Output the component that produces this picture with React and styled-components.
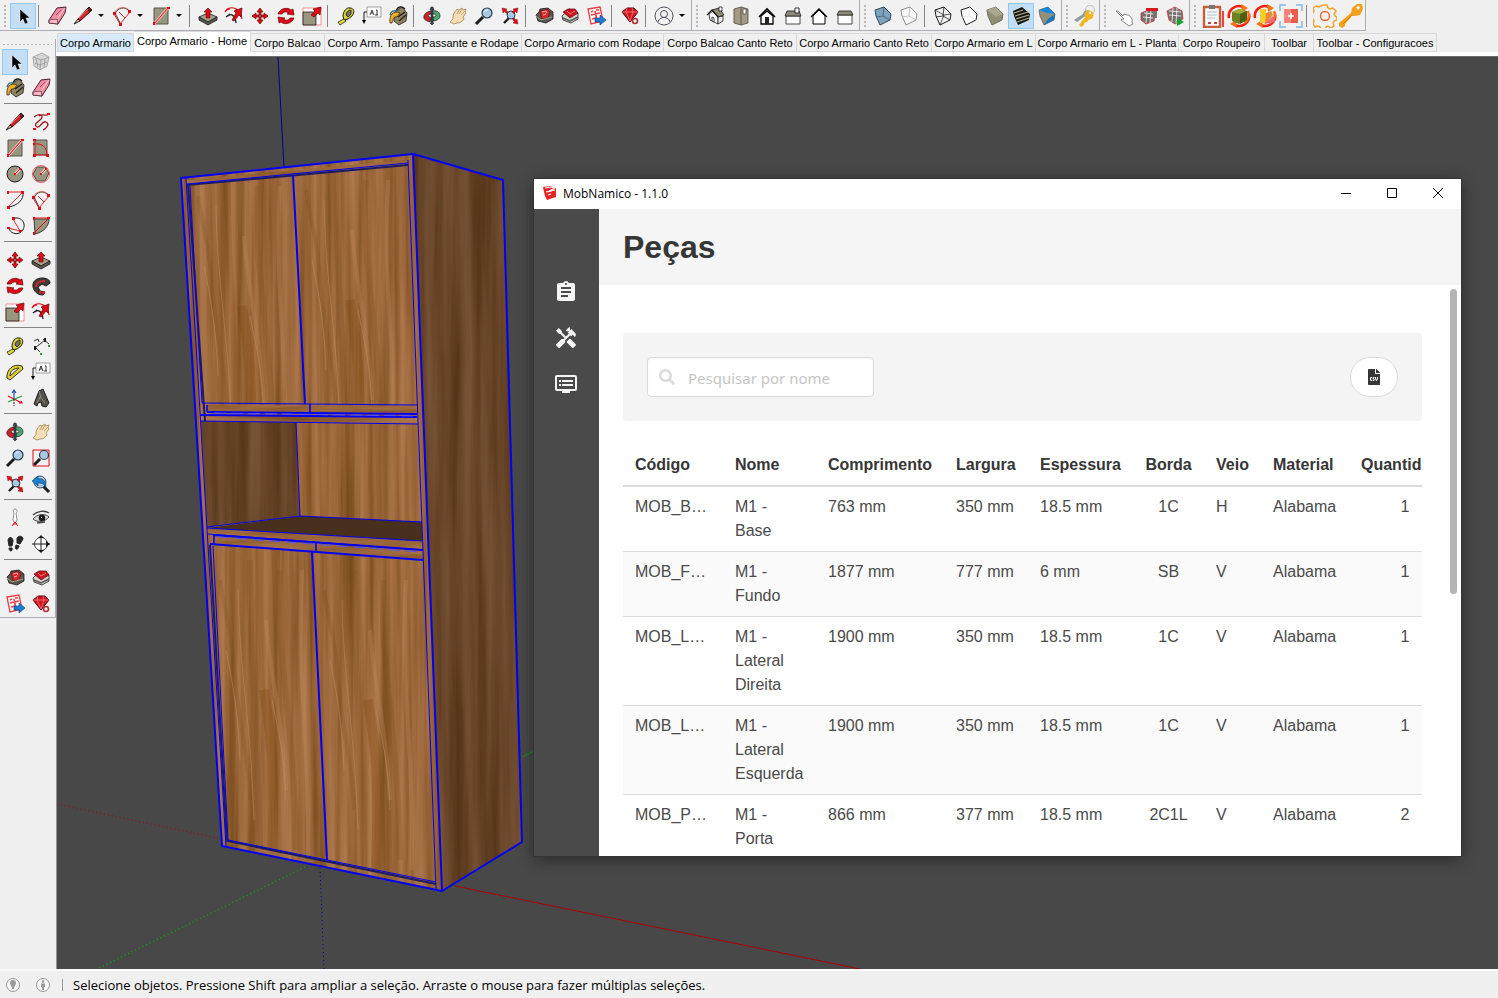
import React from 'react';
import styled, { createGlobalStyle, css } from 'styled-components';
import { MdAssignment, MdHandyman, MdDvr } from 'react-icons/md';
import { FaSearch, FaFileCsv } from 'react-icons/fa';

const GlobalStyle = createGlobalStyle`
  * { box-sizing: border-box; }
  html, body { margin: 0; height: 100%; }
  #root { height: 100%; }
  body {
    background: #f0f0f0;
    color: #000;
    font-family: "Liberation Sans", Arial, sans-serif;
    overflow: hidden;
  }
  button, input { font: inherit; }
`;

const uiFont = '"Open Sans", "Noto Sans", sans-serif';

/* ---------- shell ---------- */

const Shell = styled.div`
  display: flex;
  flex-direction: column;
  height: 100vh;
`;

const TopBar = styled.header`
  display: flex;
  flex: none;
  height: 31px;
`;

const ToolGroup = styled.div`
  display: flex;
  align-items: center;
  flex: none;
  padding: 2px 1px 1px 0;
  background: #f1f1f1;
  border-right: 1px solid #a9adb1;
  border-bottom: 1px solid #a9adb1;
`;

const Grip = styled.span`
  flex: none;
  width: 10px;
  height: 24px;
  background: radial-gradient(circle, #b8b8b8 1px, transparent 1px) 0 0 / 10px 4px;
`;

const Tool = styled.button`
  display: block;
  flex: none;
  width: 26px;
  height: 26px;
  padding: 0;
  border: 1px solid ${(p) => (p.$active ? '#90c8f6' : 'transparent')};
  background: ${(p) => (p.$active ? '#c4dff5' : 'transparent')};
  svg { display: block; width: 24px; height: 24px; }
`;

const Caret = styled.button`
  flex: none;
  width: 13px;
  height: 26px;
  padding: 0 0 0 2px;
  border: 0;
  background: transparent;
  &::before {
    content: '';
    display: block;
    width: 0;
    border: 3px solid transparent;
    border-top-color: #000;
    border-bottom: 0;
  }
`;

const Rule = styled.span`
  flex: none;
  background: #858585;
  ${(p) =>
    p.$across
      ? css`width: 48px; height: 1px; margin: 2px 0 5px 2px;`
      : css`width: 1px; height: 22px; margin: 0 5px 0 2px;`}
`;

const Body = styled.div`
  display: flex;
  flex: 1;
  min-height: 0;
`;

const SideDock = styled.aside`
  flex: none;
  width: 56px;
  padding-top: 8px;
`;

const SideTools = styled.div`
  display: flex;
  flex-wrap: wrap;
  padding: 1px 0 0 2px;
  background: #f1f1f1;
  border-right: 1px solid #a9adb1;
  border-bottom: 1px solid #a9adb1;
`;

const SideGrip = styled.span`
  width: 50px;
  height: 9px;
  background: radial-gradient(circle, #b8b8b8 1px, transparent 1px) 0 0 / 4px 9px;
`;

const Workspace = styled.div`
  display: flex;
  flex-direction: column;
  flex: 1;
  min-width: 0;
`;

const Tabs = styled.nav`
  display: flex;
  align-items: flex-end;
  flex: none;
  height: 25px;
  padding-left: 1px;
  border-bottom: 4px solid #fff;
  background: #f0f0f0;
`;

const Tab = styled.button`
  flex: 0 0 ${(p) => p.$width}px;
  height: ${(p) => (p.$selected ? '21px' : '19px')};
  padding: ${(p) => (p.$selected ? '0 0 2px' : '0')};
  border: 1px solid #d9d9d9;
  border-left-width: ${(p) => (p.$first ? '1px' : '0')};
  border-bottom-color: ${(p) => (p.$selected ? '#fff' : '#d9d9d9')};
  background: ${(p) => (p.$selected ? '#fff' : p.$first ? '#d8eaf9' : '#f0f0f0')};
  font-size: 11px;
  line-height: 16px;
  text-align: center;
  white-space: nowrap;
`;

const Viewport = styled.main`
  position: relative;
  flex: 1;
  min-height: 0;
  overflow: hidden;
  background: #484848;
  border-top: 1px solid #6b6b6b;
  border-left: 1px solid #8f8f8f;
`;

const Scene = styled.svg`
  display: block;
  width: 1441px;
  height: 912px;
`;

const StatusBar = styled.footer`
  display: flex;
  align-items: center;
  flex: none;
  height: 29px;
  padding: 0 0 0 5px;
  border-top: 2px solid #fafafa;
  font-family: ${uiFont};
  font-size: 13px;
`;

const StatusIcon = styled.svg`
  width: 16px;
  height: 16px;
  margin-right: 14px;
`;

const StatusText = styled.p`
  margin: 0 0 0 -3px;
  padding-left: 10px;
  border-left: 1px solid #999;
  line-height: 12px;
`;

/* ---------- plugin window ---------- */

const Dialog = styled.section`
  position: absolute;
  top: 122px;
  right: 37px;
  bottom: 113px;
  left: 477px;
  display: flex;
  flex-direction: column;
  background: #fff;
  box-shadow: 0 0 0 1px #353535, 0 3px 16px rgba(0, 0, 0, 0.45);
`;

const TitleBar = styled.div`
  display: flex;
  align-items: center;
  flex: none;
  height: 30px;
  padding: 0 0 2px 8px;
  font-family: ${uiFont};
  font-size: 12px;
`;

const Logo = styled.svg`
  width: 16px;
  height: 16px;
  margin-right: 5px;
`;

const TitleText = styled.span`
  flex: 1;
`;

const WinButton = styled.button`
  width: 46px;
  height: 28px;
  padding: 0;
  border: 0;
  background: transparent;
  svg { display: block; margin: 0 auto; }
`;

const DialogBody = styled.div`
  display: flex;
  flex: 1;
  min-height: 0;
`;

const DialogNav = styled.nav`
  display: flex;
  flex-direction: column;
  align-items: center;
  flex: none;
  gap: 22px;
  width: 65px;
  padding: 71px 1px 0 0;
  background: #4a4a4a;
`;

const NavLink = styled.a`
  display: block;
  height: 24px;
  color: #f5f5f5;
  svg { display: block; width: 24px; height: 24px; }
`;

const Page = styled.div`
  position: relative;
  display: flex;
  flex-direction: column;
  flex: 1;
  min-width: 0;
`;

const PageHeader = styled.header`
  flex: none;
  padding: 20px 24px;
  background: #f5f5f5;
`;

const Heading = styled.h1`
  margin: 0;
  color: #363636;
  font-size: 32px;
  font-weight: 700;
  line-height: 36px;
`;

const PageContent = styled.div`
  flex: 1;
  min-height: 0;
  overflow: hidden;
  padding: 48px 39px 0 24px;
`;

const ScrollThumb = styled.span`
  position: absolute;
  top: 80px;
  right: 4px;
  width: 7px;
  height: 305px;
  border-radius: 4px;
  background: #b4b4b4;
`;

const FilterBox = styled.form`
  display: flex;
  justify-content: space-between;
  padding: 24px;
  border-radius: 4px;
  background: #f4f4f4;
`;

const SearchField = styled.label`
  display: flex;
  align-items: center;
  gap: 13px;
  width: 227px;
  height: 40px;
  padding-left: 11px;
  border: 1px solid #dbdbdb;
  border-radius: 4px;
  background: #fff;
  box-shadow: inset 0 1px 2px rgba(10, 10, 10, 0.05);
  color: #dbdbdb;
  svg { flex: none; width: 16px; height: 16px; }
`;

const SearchInput = styled.input`
  flex: 1;
  min-width: 0;
  height: 24px;
  padding: 2px 0 0;
  border: 0;
  outline: 0;
  background: transparent;
  color: #363636;
  font-family: "Noto Sans", sans-serif;
  font-size: 15px;
  &::placeholder { color: #c6c6c6; opacity: 1; }
`;

const RoundButton = styled.button`
  display: flex;
  align-items: center;
  justify-content: center;
  width: 48px;
  height: 40px;
  padding: 0;
  border: 1px solid #dbdbdb;
  border-radius: 20px;
  background: #fff;
  color: #363636;
  svg { width: 12px; height: 16px; }
`;

const TableClip = styled.div`
  margin-top: 24px;
  overflow: hidden;
`;

const PartsTable = styled.table`
  width: 838px;
  table-layout: fixed;
  border-collapse: separate;
  border-spacing: 0;
  color: #4a4a4a;
  font-size: 16px;
  line-height: 24px;
  tbody tr:nth-child(even) { background: #fafafa; }
`;

const Th = styled.th`
  padding: 8px 12px;
  border-bottom: 2px solid #dbdbdb;
  color: #363636;
  text-align: ${(p) => (p.$center ? 'center' : 'left')};
`;

const Td = styled.td`
  padding: 8px 12px;
  border-bottom: 1px solid #dbdbdb;
  vertical-align: top;
  text-align: ${(p) => (p.$center ? 'center' : 'left')};
  white-space: ${(p) => (p.$nowrap ? 'nowrap' : 'normal')};
`;

/* ---------- toolbar icons ---------- */

const RED = '#e00b14';
const STONE = '#98967f';
const INK = '#1c1c1c';

const box = (face, side, line = INK) => (
  <>
    <path d="M5 7l9-3 7 7-1 6-10 5-4-9z" fill={face} stroke={line} />
    <path d="M14 4l-1 9 7 4M13 13l-7 1" fill="none" stroke={side} strokeWidth=".8" />
  </>
);

const cycle = (
  <>
    <path d="M3 15A10 10 0 0 1 17 4" fill="none" stroke="#f3200f" strokeWidth="2.600" />
    <path d="M23 11A10 10 0 0 1 9 22" fill="none" stroke="#f3200f" strokeWidth="2.600" />
    <path d="M15 1l7 4-6 4z" fill="#f4731c" />
    <path d="M11 25l-7-4 6-4z" fill="#f4731c" />
    <path d="M22 8c2 5 0 10-4 12" fill="none" stroke="#f4731c" strokeWidth="2.400" />
  </>
);

const icons = {
  cursor: <path d="M10 6v13l3-3 2 5 3-1-2-5h4z" fill="#000" stroke="#fff" strokeWidth=".5" />,
  eraser: (
    <>
      <path d="M5 17L13 5l9-1-1 6-7 11-9-1z" fill="#f08ba0" stroke="#45222a" />
      <path d="M5 17l8-1 8-11" fill="none" stroke="#ffd0da" />
      <path d="M5 17l8-1 1 5-9-1z" fill="#ffb9c7" stroke="#45222a" strokeWidth=".7" />
      <path d="M12 12l5-5" stroke="#b04a60" />
    </>
  ),
  pencil: (
    <>
      <path d="M8 16L18 5l3 3-11 10z" fill="#d8232b" stroke="#3d0d0d" />
      <path d="M17 6l2-2 3 3-2 2z" fill="#7a1b1b" stroke={INK} />
      <path d="M4 21l4-5 2 2z" fill="#efcf9d" stroke={INK} />
      <path d="M9 15L18 6" stroke="#ff7d7d" strokeWidth=".8" />
    </>
  ),
  arc: (
    <>
      <path d="M6 11C8 5 16 2 21 9M11 20L6 10" fill="none" stroke={INK} strokeWidth=".9" />
      <path d="M21 9L11 21L5 11M10 9l6 6" fill="none" stroke={RED} strokeWidth=".9" />
      <path d="M5 10C8 4 16 3 20 7" fill="none" stroke="#f25c5c" strokeWidth=".8" />
      <path d="M4 9h3v3H4zM19 7h3v3h-3zM10 20h3v3h-3z" fill={RED} />
    </>
  ),
  rect: (
    <>
      <path d="M6 5h14v16H6z" fill={STONE} stroke="#55564a" />
      <path d="M6 21L20 5" stroke="#ffd9d9" strokeWidth="2.600" />
      <path d="M6 21L20 5" stroke={RED} strokeWidth="1.100" />
      <path d="M5 19h2v3H5zM19 4h3v2h-3z" fill={RED} />
    </>
  ),
  rotRect: (
    <>
      <path d="M7 5h12v15H7z" fill={STONE} stroke="#55564a" />
      <path d="M6 20V5M6 9c8-1 13 3 13 11H6" fill="none" stroke={RED} />
      <path d="M5 4h3v2H5zM5 19h3v3H5zM18 19h3v3h-3zM5 8h2v2H5z" fill={RED} />
    </>
  ),
  circle: (
    <>
      <circle cx="13" cy="13" r="8" fill={STONE} stroke={INK} />
      <path d="M13 13l5-5" stroke="#ffd9d9" strokeWidth="2.600" />
      <path d="M13 13l5-5" stroke={RED} />
      <path d="M12 12h2v2h-2zM17 7h2v2h-2z" fill={RED} />
    </>
  ),
  polygon: (
    <>
      <path d="M9 6h8l4 6-4 8H9l-4-7z" fill={STONE} stroke="#444" />
      <circle cx="13" cy="13" r="8.500" fill="none" stroke="#f25c5c" />
      <path d="M13 13l5-5" stroke="#ffd9d9" strokeWidth="2.600" />
      <path d="M13 13l5-5" stroke={RED} />
      <path d="M12 12h2v2h-2zM17 7h2v2h-2z" fill={RED} />
    </>
  ),
  arcCenter: (
    <>
      <path d="M21 5c1 8-5 13-14 15" fill="none" stroke={INK} />
      <path d="M5 5h16L6 20" fill="none" stroke={RED} strokeWidth=".9" />
      <path d="M5 4h2v3H5zM19 4h3v3h-3zM5 19h3v3H5z" fill={RED} />
    </>
  ),
  arc3: (
    <>
      <path d="M13 5c9-1 12 9 6 14-5 4-12 0-12-4" fill="none" stroke={INK} />
      <path d="M11 6l7 12-12-3" fill="none" stroke={RED} strokeWidth=".9" />
      <path d="M10 4h3v3h-3zM17 17h3v2h-3zM5 14h3v2H5z" fill={RED} />
    </>
  ),
  pie: (
    <>
      <path d="M6 6h15c0 7-5 13-14 15z" fill={STONE} stroke={INK} strokeWidth=".8" />
      <path d="M6 5h15L6 20" fill="none" stroke={RED} />
      <path d="M5 4h2v3H5zM19 4h3v2h-3zM5 19h2v3H5z" fill={RED} />
    </>
  ),
  push: (
    <>
      <path d="M4 14l9-4 9 4-9 5z" fill="#a5a38b" stroke={INK} strokeWidth=".8" />
      <path d="M4 14v3l9 5 9-5v-3l-9 5z" fill="#5c5b4b" stroke={INK} strokeWidth=".8" />
      <path d="M13 5l4 4h-2v6h-4V9H9z" fill={RED} stroke="#5c0509" strokeWidth=".6" />
    </>
  ),
  offset: (
    <>
      <path d="M5 7c6-5 15-1 16 9M4 9c1-2 3-3 5-3" fill="none" stroke={RED} strokeWidth="1.200" />
      <path d="M7 13c3-3 7-1 8 7M5 14l4-3" fill="none" stroke={INK} strokeWidth="1.300" />
      <path d="M11 17l4-7-2-2 8-3-1 9-2-2-5 6z" fill={RED} stroke="#5c0509" strokeWidth=".7" />
    </>
  ),
  move: (
    <>
      <path d="M13 5l3 4h-2v3h-2V9h-2zM13 21l-3-4h2v-3h2v3h2zM5 13l4-3v2h3v2H9v2zM21 13l-4 3v-2h-3v-2h3v-2z" fill={RED} stroke="#6b0509" strokeWidth=".7" />
    </>
  ),
  rotate: (
    <>
      <path d="M5 11C7 5 15 4 18 7l2-1 1 6-7-1 2-1c-3-2-6-1-7 1z" fill={RED} stroke="#6b0509" strokeWidth=".7" />
      <path d="M21 15c-2 6-10 7-13 4l-2 1-1-6 7 1-2 1c3 2 6 1 7-1z" fill={RED} stroke="#6b0509" strokeWidth=".7" />
    </>
  ),
  scale: (
    <>
      <path d="M4 5h18v17H4z" fill="#fff" stroke="#f2777b" strokeWidth=".8" />
      <path d="M4 9h13v13H4z" fill={STONE} stroke={INK} strokeWidth=".8" />
      <path d="M12 12l4-4-2-2 8-2-1 8-2-2-4 4z" fill={RED} stroke="#6b0509" strokeWidth=".7" />
    </>
  ),
  followMe: (
    <>
      <path d="M5 14c-1-6 4-9 9-9 5 0 8 2 8 5l-4 3-4-2-4 3 2 4 5 1-2 3c-6 0-9-4-10-8z" fill="#413b36" stroke={INK} />
      <path d="M8 14c0-5 4-6 9-6M11 19l6 1" fill="none" stroke="#c92a2f" strokeWidth="2" />
    </>
  ),
  tape: (
    <>
      <path d="M10 13c0-5 4-9 7-8 4 0 5 4 2 8l-4 3-4 1z" fill="#d8d034" stroke={INK} />
      <path d="M13 12c0-3 3-5 5-5v4l-3 3z" fill="#77755f" stroke={INK} strokeWidth=".8" />
      <path d="M5 19l6-3 2 2-6 4z" fill="#e8de3a" stroke={INK} strokeWidth=".8" />
    </>
  ),
  text: (
    <>
      <path d="M8 4h14v10H8z" fill="#fff" stroke="#888" strokeWidth=".8" />
      <path d="M8 9H5v10" fill="none" stroke={INK} />
      <path d="M3 17h4l-2 4z" fill="#000" />
      <path d="M11 12l2-5 2 5M12 10h2M17 7h1v5M16 12h3" fill="none" stroke="#222" strokeWidth=".9" />
    </>
  ),
  paint: (
    <>
      <path d="M10 9l7-5 5 6-1 8-7 4-5-4z" fill="#8f8360" stroke={INK} strokeWidth=".8" />
      <path d="M11 8c2-5 6-5 9-2M13 14l7-5M14 18l7-6" fill="none" stroke={INK} strokeWidth="1.300" />
      <path d="M5 20C4 12 8 7 15 10l-3 4c-3-1-4 2-5 6z" fill="#f0ae22" stroke={INK} strokeWidth=".7" />
      <path d="M5 12c1-4 4-5 7-4" fill="none" stroke="#3d6f86" strokeWidth="1.500" />
    </>
  ),
  orbit: (
    <>
      <path d="M5 13c1-4 6-5 8-5v3c-3 0-4 1-4 2l3 2-1 4c-4-1-7-3-6-6z" fill="#d0202a" stroke={INK} strokeWidth=".7" />
      <path d="M13 8c6-1 8 2 8 5s-4 5-7 5v-4c4 0 4-3 0-3z" fill="#4da673" stroke={INK} strokeWidth=".7" />
      <path d="M12 4h2l1 3h-1v13h1l-2 2-2-2h1V7h-1z" fill="#3c4552" stroke={INK} strokeWidth=".5" />
    </>
  ),
  hand: (
    <>
      <path d="M5 19l3-3v-3c1-4 3-5 4-7l2 1 3-2 1 2 3-1-1 3 1 1-3 4 1 2c-2 3-4 4-7 4l-3 1z" fill="#f5deb6" stroke="#a5854f" strokeWidth=".8" />
      <path d="M12 11l2-4M14 11l3-5M16 12l4-4" stroke="#b8955e" strokeWidth=".8" />
    </>
  ),
  zoom: (
    <>
      <path d="M5 21l7-7" stroke={INK} strokeWidth="3" />
      <circle cx="16" cy="10" r="5" fill="#a9c9e4" stroke="#2b3b4c" strokeWidth="1.200" />
      <path d="M13 9c1-2 3-2 4-2" fill="none" stroke="#e8f4ff" />
    </>
  ),
  zoomWindow: (
    <>
      <path d="M5 5h16v16H5z" fill="none" stroke={RED} />
      <path d="M6 20l6-6" stroke={INK} strokeWidth="3" />
      <circle cx="16" cy="10" r="4.500" fill="#a9c9e4" stroke="#2b3b4c" strokeWidth="1.200" />
    </>
  ),
  extents: (
    <>
      <path d="M7 20l5-5" stroke={INK} strokeWidth="2.400" />
      <circle cx="14" cy="12" r="4" fill="#a9c9e4" stroke="#2b3b4c" />
      <path
        d="M5 5l5 1-1 1 2 2-1.500 1.500-2-2L6 10zM21 5l-5 1 1 1-2 2 1.500 1.500 2-2L20 10zM21 21l-1-5-1 1-2-2-1.500 1.500 2 2L16 20z"
        fill={RED}
        stroke="#6b0509"
        strokeWidth=".4"
      />
    </>
  ),
  previous: (
    <>
      <path d="M14 14l7 7" stroke={INK} strokeWidth="3" />
      <circle cx="12" cy="11" r="6" fill="#a9c9e4" stroke="#33526b" />
      <path d="M4 10l6-5v3c6-1 8 3 8 8-3-4-5-4-8-4v3z" fill="#1e80d0" stroke="#0b3e6c" strokeWidth=".6" />
    </>
  ),
  warehouse: (
    <>
      <path d="M5 12l3-3 1-3 8-1 5 4v7l-7 4-8-2z" fill="#59564b" stroke={INK} strokeWidth=".8" />
      <path d="M9 8l7-2 3 3-2 6-6 1z" fill="#d9232b" stroke="#5c0509" strokeWidth=".6" />
      <path d="M11 9l4-1 1 2M12 12l3-1" fill="none" stroke="#ffb8b8" />
      <path d="M5 13l5 4 11-3" fill="none" stroke="#a8a695" />
    </>
  ),
  gem: (
    <>
      <path d="M5 13l7-7 9 4v6l-7 4-8-3z" fill="#d7d7d2" stroke={INK} strokeWidth=".8" />
      <path d="M6 9l5-3 7 0 3 4-8 5z" fill="#cf1620" stroke="#4a0508" strokeWidth=".7" />
      <path d="M10 8l3 3 5-3" fill="none" stroke="#ff9292" strokeWidth=".8" />
      <path d="M6 15l7 3 8-4" fill="none" stroke="#555" strokeWidth="1.500" />
    </>
  ),
  layout: (
    <>
      <path d="M5 6l12-2 3 14-12 3z" fill="#fff" stroke="#ee3a42" strokeWidth="1.300" />
      <path d="M8 9l2-1M13 7l3 0M8 12l9-2M9 16l4-1M12 8l2 9" stroke="#ee3a42" strokeWidth="1.600" />
      <path d="M12 15h5v-3l6 5-6 5v-3h-5z" fill="#1c7bd4" stroke="#0b3e6c" strokeWidth=".6" />
    </>
  ),
  extension: (
    <>
      <path d="M5 9l5-4h7l4 4-8 10z" fill="#cf1620" stroke="#4a0508" />
      <path d="M5 9h16M10 5l-1 4 4 9 3-9-1-4" fill="none" stroke="#ff8585" strokeWidth=".7" />
      <circle cx="18" cy="18" r="2.500" fill="#eee" stroke="#b02f36" strokeWidth="1.600" />
    </>
  ),
  user: (
    <>
      <circle cx="13" cy="13" r="9" fill="none" stroke="#52525c" />
      <circle cx="13" cy="11" r="3.500" fill="none" stroke="#52525c" />
      <path d="M7 19c1-6 11-6 12 0" fill="none" stroke="#52525c" />
    </>
  ),
  iso: (
    <>
      <path d="M7 11l4-3 5 6v7l-8-4z" fill="#fff" stroke={INK} strokeWidth=".8" />
      <path d="M16 14l5-1v5l-5 3z" fill="#e8e8e8" stroke={INK} strokeWidth=".8" />
      <path d="M10 7l7-2 5 7-6 2z" fill="#8d8b76" stroke={INK} strokeWidth=".8" />
      <path d="M5 12l5-5 6 7" fill="none" stroke={INK} strokeWidth="1.200" />
      <path d="M17 4h3v4h-3zM10 14l2 1v4l-2-1z" fill="#fff" stroke={INK} strokeWidth=".8" />
    </>
  ),
  topView: (
    <>
      <path d="M6 6l7-2 7 2v14l-7 2-7-2z" fill="#a09b82" stroke="#504d40" strokeWidth=".8" />
      <path d="M13 4v18M15 6h3v5h-3z" fill="#fff" stroke="#504d40" strokeWidth=".8" />
    </>
  ),
  front: (
    <>
      <path d="M7 13v8h12v-8l-6-5z" fill="#fff" stroke="#000" strokeWidth="1.300" />
      <path d="M5 14l8-8 8 8" fill="none" stroke="#000" strokeWidth="1.600" />
      <path d="M11 14h4v7h-4z" fill="#222" />
    </>
  ),
  right: (
    <>
      <path d="M6 13h14v8H6z" fill="#fff" stroke={INK} strokeWidth=".8" />
      <path d="M7 8h12l2 5H5z" fill="#8d8b76" stroke={INK} strokeWidth=".8" />
      <path d="M15 5h4v5h-4z" fill="#fff" stroke={INK} strokeWidth=".9" />
    </>
  ),
  back: (
    <>
      <path d="M7 13v8h12v-8l-6-6z" fill="#fff" stroke="#000" />
      <path d="M5 14l8-8 8 8" fill="none" stroke="#000" strokeWidth="1.300" />
    </>
  ),
  left: (
    <>
      <path d="M6 12h14v9H6z" fill="#fff" stroke={INK} strokeWidth=".8" />
      <path d="M7 8h12l2 4H5z" fill="#8d8b76" stroke={INK} strokeWidth=".8" />
    </>
  ),
  xray: box('#7fa3bd', '#3d5d73', '#2c4a60'),
  backEdges: box('#f8f8f8', '#b3b3b3', '#8d8d8d'),
  wire: (
    <>
      {box('none', INK)}
      <path d="M5 7l9 5 7-1M14 12l-4 10" fill="none" stroke={INK} strokeWidth=".7" />
    </>
  ),
  hidden: box('#fff', '#ddd'),
  shaded: (
    <>
      {box('#918e76', '#918e76', '#6d6a58')}
      <path d="M5 7l9-3 7 7-7 3z" fill="#aaa78e" />
    </>
  ),
  textured: (
    <>
      <path d="M5 8l9-4 8 7-1 6-11 5-4-9z" fill="#171510" />
      <path d="M6 10l9-3M7 13l13-4M8 16l13-4M9 19l12-4" stroke="#b0aa88" strokeWidth="1.300" />
    </>
  ),
  mono: (
    <>
      <path d="M5 7l9-3 7 7-1 6-10 5-4-9z" fill="#938f78" stroke="#555" strokeWidth=".7" />
      <path d="M5 7l9-3 7 7-8-1z" fill="#1688e0" />
      <path d="M21 11l-1 6-10 5 4-6z" fill="#1877c2" />
    </>
  ),
  keys: (
    <>
      <circle cx="18" cy="7" r="4.500" fill="none" stroke="#b9c3c6" strokeWidth="1.200" />
      <path d="M2 17l9-6c0-3 4-5 7-3l-1 5-5 1-7 5z" fill="#8e9da1" />
      <circle cx="17" cy="12" r="4.500" fill="#f3b51e" />
      <path d="M14 13l-7 9 2 2 3-2v-2l3-1 3-4z" fill="#f3b51e" />
      <circle cx="18" cy="10" r="1.200" fill="#f1f1f1" />
    </>
  ),
  pointer: (
    <path d="M6 8l2 0 5 5 1-2 3 1 2 0 3 4 0 3 1 2-4 2-8-6 1-1 2 0z" fill="#fff" stroke="#777" strokeWidth=".9" />
  ),
  component: (
    <>
      <path d="M5 10l10-4 5 3-2 9-8 3-5-4z" fill="#77706c" stroke="#d2343c" strokeWidth=".8" />
      <path d="M8 10l9 1M7 14l10 1M11 8l-1 12M15 7l-1 13" stroke="#eee" strokeWidth=".9" />
      <path d="M10 5h12v3H10z" fill="#d81820" />
      <path d="M19 8h2v7h-2z" fill="#777" />
    </>
  ),
  componentPlay: (
    <>
      <path d="M5 8l8-4 7 4 1 8-8 5-6-4z" fill="#77706c" stroke="#d2343c" strokeWidth=".8" />
      <path d="M7 8l12 1M7 12l12 1M11 5l-1 14M15 5l-1 15" stroke="#eee" strokeWidth=".9" />
      <path d="M15 15l7 4-7 4z" fill="#12a62b" />
    </>
  ),
  clipboard: (
    <>
      <path d="M4 4h16v20H4z" fill="#f7f9fa" stroke="#c3613c" strokeWidth="2.400" />
      <path d="M9 2h6v4H9z" fill="#777" />
      <path d="M7 9h10M7 12h10M7 15h8" stroke="#aac0cc" />
      <path d="M8 20h3M14 20h3" stroke="#b44" strokeWidth="2" />
      <path d="M23 8v16" stroke="#f00" strokeWidth="1.500" />
    </>
  ),
  cubeCycle: (
    <>
      {cycle}
      <path d="M6 9l7-3 8 2v9l-8 4-7-3z" fill="#6f8120" />
      <path d="M6 9l8 2 7-3-8-2z" fill="#9ead37" />
      <path d="M14 11v10l7-4V8z" fill="#4e6012" />
    </>
  ),
  colorCycle: (
    <>
      {cycle}
      <path d="M8 6h6v14H8z" fill="#f8cf2a" />
      <path d="M14 10l5-2 2 4-8 9z" fill="#f08b35" />
      <path d="M12 21l9-8 2 6z" fill="#ed6a76" />
    </>
  ),
  target: (
    <>
      <path d="M2 8V2h6M18 2h6v6M24 18v6h-6M8 24H2v-6" fill="none" stroke="#9fc6e6" strokeWidth="2" />
      <path d="M6 6h14v14H6z" fill="#ee5c50" />
      <path d="M6 6h7v14H6z" fill="#f5857a" />
      <path d="M13 10v6M10 13h6" stroke="#fff" strokeWidth="1.500" />
    </>
  ),
  gear: (
    <>
      <path
        d="M11 2h4l1 3 2 1 3-1 3 3-2 3 1 2 2 1v3l-3 1-1 2 1 3-3 2-3-2-2 1-1 3h-3l-2-3-2-1-3 1-2-3 1-3-1-2-3-1v-4l3-1 1-2-1-3 3-2 3 1 2-1z"
        fill="none"
        stroke="#f3a22e"
        strokeWidth="1.500"
        strokeLinejoin="round"
      />
      <circle cx="13" cy="13" r="4.500" fill="none" stroke="#ef6b2c" strokeWidth="1.500" />
    </>
  ),
  goldKey: (
    <>
      <path d="M14 5l5-4 5 0 1 5-3 6-5 1-3 0-7 8v2l-3 2-3-2v-3L13 10z" fill="#f2a11c" />
      <path d="M18 4l3-1 1 2-2 2z" fill="#f1f1f1" />
      <path d="M5 21l9-9" stroke="#d5810f" />
    </>
  ),
  ghostBox: (
    <>
      <path d="M5 8l9-4 7 4-2 9-7 4-6-4z" fill="#d5d5d5" stroke="#aaa" />
      <path d="M5 8l8 3 8-3M13 11l-1 10M8 10l2 8M17 10l-1 9M7 14l5 2 7-3" fill="none" stroke="#999" strokeWidth=".8" />
    </>
  ),
  freehand: (
    <>
      <path d="M6 8c6-5 11-1 6 3s-6 5-3 7 5-7 9-5 1 6-3 8M11 7c4-3 8 1 9-2" fill="none" stroke="#9d1820" strokeWidth="1.300" />
      <path d="M19 4h3v2h-3zM5 19h3v2H5z" fill={RED} />
    </>
  ),
  dimension: (
    <>
      <path d="M7 15l10-8M7 14l5 5M15 6l6 5M6 8l4-2 1 3" fill="none" stroke={INK} strokeWidth=".9" />
      <path d="M12 20h2v2h-2zM20 12h2v2h-2z" fill="#22a03a" />
      <path d="M6 13h2v4H6zM16 5h2v4h-2z" fill={INK} />
    </>
  ),
  protractor: (
    <>
      <path d="M5 19C4 11 11 4 20 7l1 3L8 21z" fill="#e0d32e" stroke={INK} strokeWidth=".9" />
      <path d="M8 17c0-5 4-8 9-8z" fill="#f1f1f1" stroke={INK} strokeWidth=".9" />
    </>
  ),
  axes: (
    <>
      <path d="M12 14V5M10 8l2-3 2 3" fill="none" stroke="#1d4fb8" strokeWidth="1.200" />
      <path d="M6 11l14 7M17 18l3 0-1-2" fill="none" stroke={RED} strokeWidth="1.200" />
      <path d="M6 17l14-6" stroke="#1f9c45" strokeWidth="1.200" />
      <path d="M12 14v7" stroke={INK} strokeDasharray="2 1" />
    </>
  ),
  text3d: (
    <>
      <path d="M6 19l5-13 4-2 6 14-3 4-4-1-1-4-3 1-1 3z" fill="#55524a" stroke={INK} />
      <path d="M11 6l2 7 4 5M12 12l-3 6" fill="none" stroke="#a09d8a" strokeWidth=".8" />
    </>
  ),
  camera: (
    <>
      <path d="M13 4c2 0 3 3 1 4l1 7-2 3-2-3 1-7c-1-1-1-4 1-4z" fill="#fff" stroke="#777" strokeWidth=".8" />
      <path d="M10 21l3-4 3 4M11 19h4" fill="none" stroke={RED} />
    </>
  ),
  eye: (
    <>
      <path d="M5 14c4-5 12-6 16-2-4 5-11 6-16 2z" fill="#ddd" stroke={INK} strokeWidth=".8" />
      <circle cx="14" cy="13" r="3.300" fill={INK} />
      <path d="M5 10c4-4 12-5 16-2M9 18l8-1" fill="none" stroke="#444" strokeWidth="1.300" />
      <path d="M13 12h1v1h-1z" fill="#fff" />
    </>
  ),
  feet: (
    <path d="M6 9c1-4 5-3 5 1l-1 5H7zM7 17h3c1 4-3 4-3 0zM15 7c2-3 6-2 6 1l-3 5-3-1zM14 14l3 1c-1 5-5 4-3-1z" fill="#252525" stroke="#252525" />
  ),
  section: (
    <>
      <circle cx="13" cy="13" r="6.500" fill="#fff" stroke={INK} strokeWidth=".8" />
      <path d="M4 13h18M13 5v16" stroke={INK} />
      <path d="M13 4l3 3h-6zM22 13l-4-3v6zM13 22l-3-3h6z" fill={INK} />
    </>
  ),
};

const ToolButton = ({ name, active }) => (
  <Tool type="button" aria-label={name} $active={active}>
    <svg viewBox="1 1 24 24" aria-hidden="true">{icons[name]}</svg>
  </Tool>
);

const topGroups = [
  ['*cursor', '|', 'eraser', 'pencil', 'v', 'arc', 'v', 'rect', 'v', '|', 'push', 'offset', 'move', 'rotate', 'scale', '|',
    'tape', 'text', 'paint', '|', 'orbit', 'hand', 'zoom', 'extents', '|', 'warehouse', 'gem', 'layout', '|', 'extension', '|', 'user', 'v'],
  ['iso', 'topView', 'front', 'right', 'back', 'left'],
  ['xray', 'backEdges', '|', 'wire', 'hidden', 'shaded', '*textured', 'mono'],
  ['keys'],
  ['pointer', 'component', 'componentPlay'],
  ['clipboard', 'cubeCycle', 'colorCycle', 'target', '|', 'gear', 'goldKey'],
];

const sideItems = [
  '*cursor', 'ghostBox', 'paint', 'eraser', '|',
  'pencil', 'freehand', 'rect', 'rotRect', 'circle', 'polygon', 'arcCenter', 'arc', 'arc3', 'pie', '|',
  'move', 'push', 'rotate', 'followMe', 'scale', 'offset', '|',
  'tape', 'dimension', 'protractor', 'text', 'axes', 'text3d', '|',
  'orbit', 'hand', 'zoom', 'zoomWindow', 'extents', 'previous', '|',
  'camera', 'eye', 'feet', 'section', '|',
  'warehouse', 'gem', 'layout', 'extension',
];

const renderItem = (across) => (item, i) => {
  if (item === '|') return <Rule key={i} $across={across} />;
  if (item === 'v') return <Caret key={i} type="button" aria-label="Mais opções" />;
  const active = item.startsWith('*');
  return <ToolButton key={i} name={active ? item.slice(1) : item} active={active} />;
};

const tabs = [
  { title: 'Corpo Armario', width: 77 },
  { title: 'Corpo Armario - Home', width: 117 },
  { title: 'Corpo Balcao', width: 74 },
  { title: 'Corpo Arm. Tampo Passante e Rodape', width: 197 },
  { title: 'Corpo Armario com Rodape', width: 142 },
  { title: 'Corpo Balcao Canto Reto', width: 133 },
  { title: 'Corpo Armario Canto Reto', width: 135 },
  { title: 'Corpo Armario em L', width: 104 },
  { title: 'Corpo Armario em L - Planta', width: 143 },
  { title: 'Corpo Roupeiro', width: 86 },
  { title: 'Toolbar', width: 49 },
  { title: 'Toolbar - Configuracoes', width: 123 },
];

/* ---------- 3D scene ---------- */

const WoodFilter = ({ id, seed, freq, r, g, b }) => (
  <filter id={id} x="0" y="0" width="100%" height="100%" colorInterpolationFilters="sRGB">
    <feTurbulence type="fractalNoise" baseFrequency={freq} numOctaves="4" seed={seed} />
    <feColorMatrix values="1 0 0 0 0  1 0 0 0 0  1 0 0 0 0  0 0 0 0 1" />
    <feComponentTransfer>
      <feFuncR type="table" tableValues={r} />
      <feFuncG type="table" tableValues={g} />
      <feFuncB type="table" tableValues={b} />
    </feComponentTransfer>
    <feComposite in2="SourceGraphic" operator="in" />
  </filter>
);

const light = { r: '.45 .52 .61 .68 .72', g: '.27 .33 .405 .47 .51', b: '.1 .15 .23 .3 .34' };
const dark = { r: '.31 .35 .41 .46 .49', g: '.19 .22 .275 .32 .34', b: '.08 .11 .16 .21 .24' };

const doors = [
  { id: 'd1', pts: '188,184 293,175 305,404 202,403', x: 190, y: 176 },
  { id: 'd2', pts: '293,175 408,164 417,405 305,404', x: 298, y: 170 },
  { id: 'd3', pts: '211,544 312,552 327,860 227,840', x: 212, y: 560 },
  { id: 'd4', pts: '312,552 423,559 436,882 327,860', x: 316, y: 570 },
];

const Grain = ({ x, y }) => (
  <g transform={`translate(${x} ${y})`} fill="none">
    <path d="M8 20C14 60 20 70 22 110C26 160 36 190 38 240" stroke="#7d4b20" strokeWidth="4" opacity=".25" />
    <path d="M38 0C36 80 46 140 48 300M68 10C62 90 82 150 84 290" stroke="#7a4a18" strokeWidth="6" opacity=".22" />
    <path d="M52 130C58 170 64 200 60 300" stroke="#7a4206" strokeWidth="10" opacity=".28" />
    <path d="M54 60C58 120 70 150 74 230M90 10C84 120 98 170 96 300" stroke="#c08a58" strokeWidth="4" opacity=".3" />
    <path d="M26 30C28 120 38 150 42 260M60 140C66 170 72 190 74 240M14 90C20 120 26 150 28 200" stroke="#c58f5c" strokeWidth="1" opacity=".5" />
  </g>
);

const Cabinet = () => (
  <Scene aria-label="Modelo do armário" role="img">
    <defs>
      <WoodFilter id="wood" seed="7" freq="0.11 0.003" {...light} />
      <WoodFilter id="woodDark" seed="12" freq="0.08 0.003" {...dark} />
      <WoodFilter id="woodFlat" seed="4" freq="0.008 0.1" {...light} />
      {doors.map((d) => (
        <clipPath key={d.id} id={d.id}><polygon points={d.pts} /></clipPath>
      ))}
    </defs>
    <g transform="translate(-57 -57)">
      <path d="M278 57L284 168" stroke="#00009c" />
      <path d="M522 757L536 750" stroke="#00a000" />
      <path d="M57 804L222 839" stroke="#b00000" strokeDasharray="1 3" />
      <path d="M455 886L860 969" stroke="#b00000" />
      <path d="M305 867L97 969" stroke="#00b000" strokeWidth="1.300" strokeDasharray="1 3" />
      <path d="M320 868L324 969" stroke="#0000a0" strokeDasharray="1 3" />

      <polygon points="413,154 503,180 523,842 442,891" filter="url(#woodDark)" />
      <polygon points="181,178 413,154 442,891 222,846" filter="url(#wood)" />
      <polygon points="186,180 408,160 408,164 187,184" filter="url(#woodFlat)" />
      {doors.map((d) => (
        <g key={d.id} clipPath={`url(#${d.id})`}><Grain x={d.x} y={d.y} /></g>
      ))}
      <polygon points="201,421 296,422 300,516 207,527" filter="url(#woodDark)" />
      <polygon points="207,528 300,516 422,522 422,541" fill="#48301c" />
      <polygon points="200,415 417,417 418,424 200,421" filter="url(#woodFlat)" />
      <polygon points="207,405 417,406 417,413 207,411" filter="url(#woodFlat)" />
      <polygon points="207,528 422,542 422,549 208,534" filter="url(#woodFlat)" />
      <polygon points="214,537 422,552 423,559 214,544" filter="url(#woodFlat)" />

      <path d="M187 185L408 165M188 184L205 421M210 545L227 842M228 841L436 884" fill="none" stroke="#1b1b64" strokeWidth="2" />
      <g fill="none" stroke="#0000f5" strokeLinejoin="round">
        <path d="M181 178L413 154L442 891L222 846ZM413 154L503 180L522 842L442 891" strokeWidth="2" />
        <path d="M293 175L305 404M312 552L327 860" strokeWidth="2" />
        <path d="M186 178L226 846M408 160L436 889" />
        <path d="M187 184L408 163M190 186L202 403M202 403L417 405M213 546L228 840M228 840L436 882" />
        <path d="M207 405V412M310 404V413M214 536V544M316 543V552" strokeWidth="1.500" />
        <path d="M207 412L417 414M200 415L417 417" strokeWidth="2" />
        <path d="M200 421L418 424M296 422L300 516M207 527L300 516L422 522M207 528L422 541M208 534L422 550" />
        <path d="M213 535L423 550M210 544L423 560" strokeWidth="2" />
      </g>
      <path d="M214 413L416 416M218 537L420 552" stroke="#5757e8" strokeDasharray="12 5" />
    </g>
  </Scene>
);

/* ---------- table data ---------- */

const columns = [
  { title: 'Código', width: 100 },
  { title: 'Nome', width: 93 },
  { title: 'Comprimento', width: 128 },
  { title: 'Largura', width: 84 },
  { title: 'Espessura', width: 105 },
  { title: 'Borda', width: 71, center: true },
  { title: 'Veio', width: 57 },
  { title: 'Material', width: 88 },
  { title: 'Quantidade', width: 112, center: true },
];

const parts = [
  ['MOB_B…', 'M1 - Base', '763 mm', '350 mm', '18.5 mm', '1C', 'H', 'Alabama', '1'],
  ['MOB_F…', 'M1 - Fundo', '1877 mm', '777 mm', '6 mm', 'SB', 'V', 'Alabama', '1'],
  ['MOB_L…', 'M1 - Lateral Direita', '1900 mm', '350 mm', '18.5 mm', '1C', 'V', 'Alabama', '1'],
  ['MOB_L…', 'M1 - Lateral Esquerda', '1900 mm', '350 mm', '18.5 mm', '1C', 'V', 'Alabama', '1'],
  ['MOB_P…', 'M1 - Porta', '866 mm', '377 mm', '18.5 mm', '2C1L', 'V', 'Alabama', '2'],
];

const PluginWindow = () => (
  <Dialog aria-label="MobNamico">
    <TitleBar>
      <Logo viewBox="0 0 16 16" aria-hidden="true">
        <path d="M1 2l7-1 6 2v9l-9 3-2-4-1-4z" fill="#e52427" />
        <path d="M3 3l6-1 4 1-6 3 6-1M4 7l6-1M6 10l3-1" fill="none" stroke="#fff" strokeWidth="1.100" />
      </Logo>
      <TitleText>MobNamico - 1.1.0</TitleText>
      <WinButton type="button" aria-label="Minimizar">
        <svg width="10" height="10" aria-hidden="true"><path d="M0 5.500H10" stroke="#000" /></svg>
      </WinButton>
      <WinButton type="button" aria-label="Maximizar">
        <svg width="10" height="10" aria-hidden="true"><path d="M.5.5h9v9h-9z" fill="none" stroke="#000" /></svg>
      </WinButton>
      <WinButton type="button" aria-label="Fechar">
        <svg width="10" height="10" aria-hidden="true"><path d="M0 0L10 10M10 0L0 10" stroke="#000" /></svg>
      </WinButton>
    </TitleBar>
    <DialogBody>
      <DialogNav>
        <NavLink href="#pecas" aria-label="Peças"><MdAssignment /></NavLink>
        <NavLink href="#ferragens" aria-label="Ferragens"><MdHandyman /></NavLink>
        <NavLink href="#resumo" aria-label="Resumo"><MdDvr /></NavLink>
      </DialogNav>
      <Page>
        <PageHeader><Heading>Peças</Heading></PageHeader>
        <PageContent>
          <FilterBox>
            <SearchField>
              <FaSearch aria-hidden="true" />
              <SearchInput type="text" placeholder="Pesquisar por nome" aria-label="Pesquisar por nome" />
            </SearchField>
            <RoundButton type="button" aria-label="Exportar CSV"><FaFileCsv /></RoundButton>
          </FilterBox>
          <TableClip>
            <PartsTable>
              <colgroup>
                {columns.map((c) => <col key={c.title} width={c.width} />)}
              </colgroup>
              <thead>
                <tr>{columns.map((c) => <Th key={c.title} $center={c.center}>{c.title}</Th>)}</tr>
              </thead>
              <tbody>
                {parts.map((row, r) => (
                  <tr key={r}>
                    {row.map((cell, i) => (
                      <Td key={i} $center={columns[i].center} $nowrap={i !== 1}>{cell}</Td>
                    ))}
                  </tr>
                ))}
              </tbody>
            </PartsTable>
          </TableClip>
        </PageContent>
        <ScrollThumb />
      </Page>
    </DialogBody>
  </Dialog>
);

export default function App() {
  return (
    <Shell>
      <GlobalStyle />
      <TopBar>
        {topGroups.map((items, g) => (
          <ToolGroup key={g}>
            <Grip />
            {items.map(renderItem(false))}
          </ToolGroup>
        ))}
      </TopBar>
      <Body>
        <SideDock>
          <SideTools>
            <SideGrip />
            {sideItems.map(renderItem(true))}
          </SideTools>
        </SideDock>
        <Workspace>
          <Tabs>
            {tabs.map((t, i) => (
              <Tab key={t.title} type="button" $width={t.width} $first={i === 0} $selected={i === 1}>{t.title}</Tab>
            ))}
          </Tabs>
          <Viewport>
            <Cabinet />
            <PluginWindow />
          </Viewport>
        </Workspace>
      </Body>
      <StatusBar>
        <StatusIcon viewBox="0 0 16 16" aria-hidden="true">
          <circle cx="8" cy="8" r="6.500" fill="#f6f6f6" stroke="#9a9a9a" />
          <path d="M8 3a3 3 0 0 1 3 3c0 2-2 3-2 6H7c0-3-2-4-2-6a3 3 0 0 1 3-3z" fill="#9a9a9a" />
        </StatusIcon>
        <StatusIcon viewBox="0 0 16 16" aria-hidden="true">
          <circle cx="8" cy="8" r="6.500" fill="#f6f6f6" stroke="#9a9a9a" />
          <circle cx="8" cy="4.500" r="1.300" fill="#9a9a9a" />
          <path d="M6 6.500h4V10H9v3H7v-3H6z" fill="#9a9a9a" />
        </StatusIcon>
        <StatusText>
          Selecione objetos. Pressione Shift para ampliar a seleção. Arraste o mouse para fazer múltiplas seleções.
        </StatusText>
      </StatusBar>
    </Shell>
  );
}
